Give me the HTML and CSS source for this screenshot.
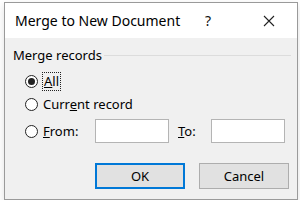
FILE: index.html
```html
<!DOCTYPE html>
<html>
<head>
<meta charset="utf-8">
<link rel="stylesheet" href="styles.css">
</head>
<body>
<div class="win">
  <div class="titlebar">
    <span class="title">Merge to New Document</span>
    <span class="help">?</span>
    <span class="close"><svg width="12" height="12" viewBox="0 0 12 12"><path d="M1 1 L11 11 M11 1 L1 11" stroke="#222" stroke-width="1.1" fill="none"/></svg></span>
  </div>
  <div class="content">
    <div class="group-head"><span class="group-label">Merge records</span><span class="line"></span></div>
    <div class="opts">
      <div class="opt r1"><span class="radio on"></span><span class="focus"><u>A</u>ll</span></div>
      <div class="opt r2"><span class="radio"></span><span class="txt">Curr<u>e</u>nt record</span></div>
      <div class="opt r3"><span class="radio"></span><span class="txt from"><u>F</u>rom:</span><span class="field"></span><span class="txt to"><u>T</u>o:</span><span class="field"></span></div>
    </div>
    <div class="buttons">
      <span class="btn default">OK</span>
      <span class="btn">Cancel</span>
    </div>
  </div>
</div>
</body>
</html>
```
FILE: styles.css
```css
html, body { margin: 0; padding: 0; background: #fff; }
body { font-family: "Noto Sans", "Open Sans", sans-serif; font-size: 13px; color: #000; }
.win {
  margin: 2px 2px 0 4px;
  width: 292px;
  height: 196px;
  border: 1px solid #9a9a9a;
  background: #f0f0f0;
  box-shadow: 0 3px 8px rgba(0,0,0,0.12);
  display: flex;
  flex-direction: column;
}
.titlebar {
  height: 35px;
  background: #fff;
  display: flex;
  align-items: center;
  padding-left: 10px;
}
.title { font-size: 14px; flex: 1; color: #000; }
.help { width: 16px; text-align: center; font-size: 14px; color: #111; margin-right: 47px; }
.close { width: 12px; height: 12px; display: flex; margin-right: 22px; }
.content { flex: 1; display: flex; flex-direction: column; }
.group-head {
  display: flex; align-items: center;
  padding: 8px 6px 0 8px;
  height: 18px;
}
.group-label { white-space: nowrap; margin-right: 2px; }
.line { flex: 1; height: 1px; background: #dcdcdc; }
.opts { padding-left: 20px; margin-top: 6px; }
.opt { display: flex; align-items: center; }
.r1 { height: 22px; }
.r2 { height: 22px; margin-top: 1px; }
.r3 { height: 24px; margin-top: 4px; }
.radio {
  width: 11px; height: 11px;
  border: 1px solid #222;
  border-radius: 50%;
  background: #fff;
  display: flex; align-items: center; justify-content: center;
  margin-right: 5px;
  flex: none;
}
.radio.on::after { content: ""; width: 7px; height: 7px; border-radius: 50%; background: #222; }
.focus { border: 1px dotted #222; padding: 0 1px; margin-left: -1px; line-height: 17px; }
.txt { white-space: nowrap; }
.from { width: 52px; }
.to { width: 33px; margin-left: 9px; }
.field { width: 72px; height: 22px; border: 1px solid #b4b4b4; background: #fff; flex: none; }
.buttons { display: flex; justify-content: flex-end; gap: 14px; padding-right: 8px; margin-top: 20px; }
.btn {
  width: 88px; height: 24px;
  border: 1px solid #adadad;
  background: #e1e1e1;
  display: flex; align-items: center; justify-content: center;
  color: #000;
}
.btn.default { border: 2px solid #0078d7; width: 86px; height: 22px; }
```
